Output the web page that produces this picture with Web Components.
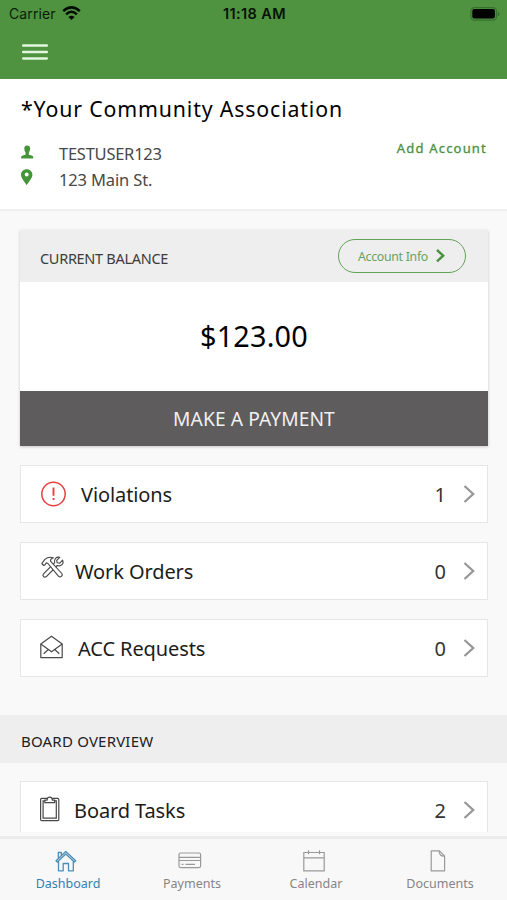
<!DOCTYPE html>
<html lang="en">
<head>
<meta charset="utf-8">
<title>Dashboard</title>
<style>
html,body{margin:0;height:100%}
body{font-family:"Noto Sans","Open Sans",sans-serif;background:#f9f9f9;color:#111;overflow:hidden}
</style>
</head>
<body>
<community-app></community-app>
<script>
const define = (name, html) => {
  const t = document.createElement('template');
  t.innerHTML = html;
  customElements.define(name, class extends HTMLElement {
    constructor() {
      super();
      this.attachShadow({ mode: 'open' }).append(t.content.cloneNode(true));
    }
  });
};

define('status-bar', `<style>
:host{display:grid;grid-template-columns:1fr auto 1fr;align-items:center;height:27px;padding:0 7px 0 9px;font:14px/27px Inter,sans-serif;color:#0c1c09}
.l{display:flex;align-items:center;gap:6px}
.c{letter-spacing:.1px}
b{font-weight:600;font-size:14.5px;letter-spacing:.4px;color:#071206}
.r{justify-self:end}
svg{display:block}
.w{margin-top:-2px}
</style>
<div class="l"><span class="c">Carrier</span><svg class="w" width="19" height="14" viewBox="0 0 19 14" fill="none" stroke="#050b04" stroke-width="2.5"><path d="M1.2 5.2Q9.5-2.4 17.8 5.2M4.1 8.3Q9.5 3.3 14.9 8.3"/><path d="M9.5 14 6.4 10.9Q9.5 8.4 12.6 10.9Z" fill="#050b04" stroke="none"/></svg></div>
<b>11:18 AM</b>
<svg class="r" width="30" height="14" viewBox="0 0 30 14"><rect x=".9" y=".6" width="25.6" height="12.6" rx="3.6" fill="none" stroke="#387030" stroke-width="1.2"/><rect x="2.3" y="2" width="22.6" height="9.6" rx="2" fill="#000"/><path d="M27.8 4.8Q29.6 5.3 29.6 7T27.8 9.2Z" fill="#387030"/></svg>`);

define('app-header', `<style>
:host{display:block;background:#4f9340;height:79px}
svg{display:block;margin:15.5px 0 0 22px}
</style><status-bar></status-bar>
<svg width="26" height="18" viewBox="0 0 26 18" fill="none" stroke="#e4f8df" stroke-width="2.5" stroke-linecap="round"><path d="M1.2 2.5H24.8M1.2 9H24.8M1.2 15.4H24.8"/></svg>`);

define('account-summary', `<style>
:host{display:block;box-sizing:border-box;height:132px;background:#fff;border-bottom:2px solid #efefef;padding:14px 20px 0 21px}
h1{margin:0;font-weight:400;font-size:21.3px;line-height:32px;letter-spacing:.85px;color:#000;white-space:nowrap}
.b{display:flex;justify-content:space-between;align-items:flex-start;margin-top:14px}
.rows{padding-top:2px}
.row{display:flex;align-items:center;height:26px;font-size:16.5px;line-height:26px;color:#484848}
.row svg{width:14px;height:18px;margin:-4px 24px 0 0;flex:none;overflow:visible}
.a{font-size:13px;line-height:18px;letter-spacing:1.2px;color:#4a9140;-webkit-text-stroke:.3px #4a9140}
.n{letter-spacing:-.25px}.m{letter-spacing:-.15px}
</style>
<h1><slot name="name"></slot></h1>
<div class="b"><div class="rows">
<div class="row"><svg viewBox="0 0 14 18" fill="#449537"><path d="M6.2 2.4C8.2 2.4 9.1 3.6 9.1 5.6C9.1 7.5 8.5 8.6 7.9 9.6V11.7Q11.6 12.4 12.2 13.5V15.5H.2V13.5Q.8 12.4 4.5 11.7V9.6C3.9 8.6 3.3 7.5 3.3 5.6C3.3 3.6 4.2 2.4 6.2 2.4Z"/></svg><span class="n"><slot name="user"></slot></span></div>
<div class="row"><svg viewBox="0 0 14 18" fill="#449537"><path fill-rule="evenodd" d="M5.7 .2C9 .2 11.4 2.6 11.4 5.7C11.4 9 8 12.2 5.7 16.2C3.4 12.2 0 9 0 5.7C0 2.6 2.4 .2 5.7 .2ZM5.7 3.6A2 2 0 1 0 5.7 7.6A2 2 0 0 0 5.7 3.6Z"/></svg><span class="m"><slot name="address"></slot></span></div>
</div><div class="a">Add Account</div></div>`);

define('balance-card', `<style>
:host{display:block;margin:19px 19px 0 20px;height:216px;box-shadow:0 1px 3px rgba(0,0,0,.2);background:#fff}
.h{display:flex;justify-content:space-between;align-items:center;height:52px;background:#eee;padding:0 22px 0 20px;box-sizing:border-box}
.t{font-size:14.5px;line-height:20px;letter-spacing:-.3px;color:#3c3c3c;padding-top:4px}
.p{box-sizing:border-box;width:128px;height:34px;border:1.6px solid #63a259;border-radius:17px;display:flex;align-items:center;padding-left:19px;gap:8px;font-size:12.3px;color:#68a25e}
.p span{letter-spacing:-.28px;padding-top:1px;white-space:nowrap}
.v{height:109px;line-height:107px;text-align:center;font-size:28.8px;letter-spacing:.2px;color:#000}
.m{height:55px;line-height:55px;text-align:center;background:#5e5c5d;color:#f1f1f1;font-size:19.2px;letter-spacing:.1px}
</style>
<div class="h"><span class="t">CURRENT BALANCE</span><div class="p"><span>Account Info</span><svg width="9" height="14" viewBox="0 0 9 14" fill="none" stroke="#4b9240" stroke-width="2.4"><path d="M1 1 7.2 6.7 1 12.4"/></svg></div></div>
<div class="v"><slot></slot></div><div class="m">MAKE A PAYMENT</div>`);

define('count-row', `<style>
:host{display:flex;align-items:center;box-sizing:border-box;height:58px;margin:0 19px 19px 20px;border:1px solid #e6e6e6;background:#fff;padding:0 11px 0 20px;font-size:20px;color:#1c1c1c}
.i{width:var(--gap,34px);flex:none}
.l{flex:1;letter-spacing:-.1px;padding-top:2px;line-height:28px;white-space:nowrap}
.n{padding-top:2px;line-height:28px;color:#333}
svg{margin-left:17px}
</style><div class="i"><slot name="icon"></slot></div><span class="l"><slot></slot></span><span class="n"><slot name="count"></slot></span>
<svg width="13" height="20" viewBox="0 0 13 20" fill="none" stroke="#979797" stroke-width="2.3"><path d="M1.5 2 10.2 10 1.5 18"/></svg>`);

const icons = {
  alert: ['26','26','<g fill="none" stroke="#e7403e"><circle cx="12.5" cy="13" r="11.7" stroke-width="1.5"/><path stroke-width="1.9" d="M12.5 6.5V14.8M12.5 17V19"/></g>'],
  tools: ['24','24','<g fill="#fff" stroke="#444" stroke-width="1.1" stroke-linejoin="round"><path d="M18.7 1.4 15.7 4.3 16.2 6.8 18.8 7.2 21.6 4.2C23.2 7.8 20 10.8 16.3 9.5L5.1 20.8Q3.5 21.6 2.4 20.4T2.5 17.8L13.7 6.7C12.6 3.2 15.4.4 18.7 1.4Z"/><path d="M.8 7.5 3.7 3.6Q7.4.2 12.4 1.8Q9.2 2.8 9.5 5.2L20.8 17.5Q21.8 19.3 20.4 20.4T17.6 20.3L6.9 7.5 5.3 6.8 4.1 8.7 2.7 9.5Z"/></g>'],
  mail: ['23','24','<g fill="none" stroke="#4a4a4a" stroke-width="1.2" stroke-linejoin="round"><path d="M.8 9 11.5 1.2 22.2 9V22.6H.8Z"/><path d="M.8 9 11.5 16.8 22.2 9M3.7 18.8 8.3 14.5M19.3 18.8 14.7 14.5"/></g>'],
  clip: ['20','26','<g fill="none" stroke="#484848" stroke-width="1.2"><rect x=".6" y="2.3" width="18.2" height="22.4" rx="1.2"/><path d="M5 4.8H3.1V22.2H16.3V4.8H14.6"/><path fill="#fff" d="M4.8 6.7V4.2H7Q7.2 1.2 9.7 1.2T12.4 4.2H14.6V6.7Z"/></g>'],
  home: ['22','22','<g fill="none" stroke="#4b8dba" stroke-width="1.3" stroke-linejoin="round"><path d="M1 10.7 10.8 1.5 20.7 10.7 19.4 12 10.8 4 2.3 12ZM3.3 7.8V2.5H6.3V5.3M3.5 11V20.8H8.2V13.5H13.5V20.8H18.3V11"/></g>'],
  card: ['24','22','<g fill="none" stroke="#999" stroke-width="1.2"><rect x="1" y="3" width="21.6" height="14.6" rx="1.5"/><path d="M1 7.3H22.6M1 10.5H22.6M3.5 14.4H5.5M7.5 14.4H17"/></g>'],
  cal: ['22','22','<g fill="none" stroke="#999" stroke-width="1.2"><path d="M.8 2.5H21.2V20.8H.8ZM.8 7.8H21.2M5.5.3V4.2M16.5.3V4.2"/></g>'],
  doc: ['16','22','<g fill="none" stroke="#999" stroke-width="1.2" stroke-linejoin="round"><path d="M1.2 .8H9.5L14.6 6.2V20.8H1.2ZM9.2 .8Q9 6.5 14.6 6.2"/></g>']
};
customElements.define('line-icon', class extends HTMLElement {
  constructor() {
    super();
    this.attachShadow({ mode: 'open' });
  }
  connectedCallback() {
    const [w, h, body] = icons[this.getAttribute('name')];
    this.shadowRoot.innerHTML = `<style>:host{display:block}svg{display:block}</style><svg width="${w}" height="${h}" viewBox="0 0 ${w} ${h}">${body}</svg>`;
  }
});

define('section-title', `<style>
:host{display:block;height:48px;margin:38px 0 18px;background:#eee;padding-left:21px;line-height:52px;font-size:15px;letter-spacing:.2px;color:#222}
</style><slot></slot>`);

define('tab-item', `<style>
:host{display:flex;flex-direction:column;align-items:center;width:124px;color:#858585;font-size:12.5px;line-height:20px}
.i{height:24px;padding-right:4px}
.t{white-space:nowrap}
</style><div class="i"><slot name="icon"></slot></div><span class="t"><slot></slot></span>`);

define('tab-bar', `<style>
:host{display:flex;box-sizing:border-box;height:64px;border-top:3px solid #ebebeb;background:#f8f8f8;padding:11px 5px 0 6px}
</style><slot></slot>`);

define('community-app', `<style>
:host{display:flex;flex-direction:column;width:507px;height:900px;background:#f9f9f9;overflow:hidden}
main{height:753px;flex:none;overflow:hidden}
.list{padding-top:19px}
tab-bar{margin-top:4px;flex:none}
</style>
<app-header></app-header>
<main>
<account-summary><span slot="name">*Your Community Association</span><span slot="user">TESTUSER123</span><span slot="address">123 Main St.</span></account-summary>
<balance-card>$123.00</balance-card>
<div class="list">
<count-row style="--gap:40px"><line-icon slot="icon" name="alert"></line-icon>Violations<span slot="count">1</span></count-row>
<count-row style="--gap:34px"><line-icon slot="icon" name="tools" style="margin-top:-7px"></line-icon>Work Orders<span slot="count">0</span></count-row>
<count-row style="--gap:37px"><line-icon slot="icon" name="mail" style="margin:-1px 0 1px -1px"></line-icon>ACC Requests<span slot="count">0</span></count-row>
</div>
<section-title>BOARD OVERVIEW</section-title>
<count-row style="--gap:33px"><line-icon slot="icon" name="clip" style="margin:-1px 0 1px -1px"></line-icon>Board Tasks<span slot="count">2</span></count-row>
</main>
<tab-bar>
<tab-item style="color:#347fb3"><line-icon slot="icon" name="home"></line-icon>Dashboard</tab-item>
<tab-item><line-icon slot="icon" name="card"></line-icon>Payments</tab-item>
<tab-item><line-icon slot="icon" name="cal"></line-icon>Calendar</tab-item>
<tab-item><line-icon slot="icon" name="doc"></line-icon>Documents</tab-item>
</tab-bar>`);
</script>
</body>
</html>
